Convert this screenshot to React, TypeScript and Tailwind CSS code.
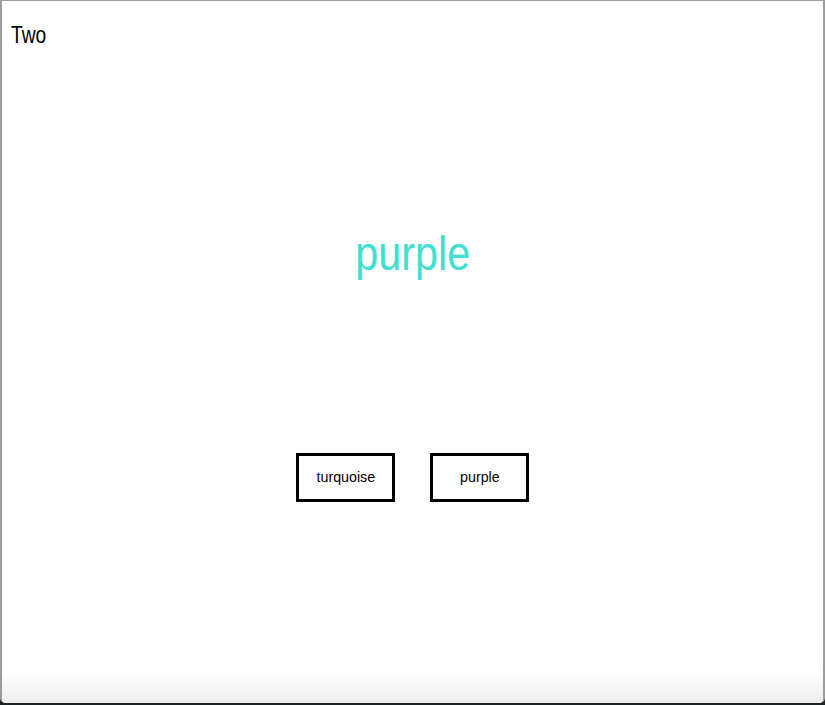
export default function App() {
  return (
    <div className="w-[825px] h-[705px] bg-[#1b2323] overflow-hidden font-['Liberation_Sans',Arial,sans-serif]">
      <div className="h-[703px] flex flex-col bg-white border-t border-l-2 border-r-2 border-[#9c9c9c] rounded-b-[5px] overflow-hidden">
        {/* Window body */}
        <main className="flex-1 flex flex-col">
          <div className="pl-[9px] pt-[22px] h-[40px]">
            <span className="inline-block text-[24px] leading-none text-black origin-left scale-x-[0.8]">Two</span>
          </div>
          <div className="mt-[189px] flex justify-center">
            <span className="inline-block text-[48px] leading-none text-[#40e0d0] scale-x-[0.86]">purple</span>
          </div>
          <div className="mt-[175px] flex justify-center gap-[35px]">
            <button className="w-[99px] h-[49px] border-[3px] border-black bg-white text-[15px] text-black">
              <span className="inline-block scale-x-[0.95]">turquoise</span>
            </button>
            <button className="w-[99px] h-[49px] border-[3px] border-black bg-white text-[15px] text-black">
              <span className="inline-block scale-x-[0.95]">purple</span>
            </button>
          </div>
        </main>
        {/* Bottom shading */}
        <div className="h-[34px] bg-gradient-to-b from-white to-[#eeeeee]" />
      </div>
    </div>
  );
}
